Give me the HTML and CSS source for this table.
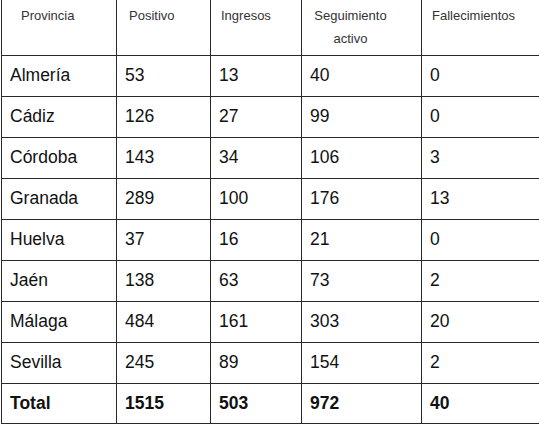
FILE: index.html
```html
<!DOCTYPE html>
<html lang="es">
<head>
<meta charset="utf-8">
<title>Casos por provincia</title>
<link rel="stylesheet" href="styles.css">
</head>
<body>
<div class="wrap">
<table class="data">
  <colgroup>
    <col class="c1"><col class="c2"><col class="c3"><col class="c4"><col class="c5">
  </colgroup>
  <thead>
    <tr>
      <th class="h-prov">Provincia</th>
      <th class="h-pos">Positivo</th>
      <th class="h-ing">Ingresos</th>
      <th class="h-seg">Seguimiento<br>activo</th>
      <th class="h-fal">Fallecimientos</th>
    </tr>
  </thead>
  <tbody>
    <tr><td>Almería</td><td>53</td><td>13</td><td>40</td><td>0</td></tr>
    <tr><td>Cádiz</td><td>126</td><td>27</td><td>99</td><td>0</td></tr>
    <tr><td>Córdoba</td><td>143</td><td>34</td><td>106</td><td>3</td></tr>
    <tr><td>Granada</td><td>289</td><td>100</td><td>176</td><td>13</td></tr>
    <tr><td>Huelva</td><td>37</td><td>16</td><td>21</td><td>0</td></tr>
    <tr><td>Jaén</td><td>138</td><td>63</td><td>73</td><td>2</td></tr>
    <tr><td>Málaga</td><td>484</td><td>161</td><td>303</td><td>20</td></tr>
    <tr><td>Sevilla</td><td>245</td><td>89</td><td>154</td><td>2</td></tr>
    <tr class="total"><td>Total</td><td>1515</td><td>503</td><td>972</td><td>40</td></tr>
  </tbody>
</table>
</div>
</body>
</html>
```

FILE: styles.css
```css
html, body {
  margin: 0;
  padding: 0;
  background: #ffffff;
  overflow: hidden;
}

.wrap {
  width: 539px;
  height: 426px;
  overflow: hidden;
  padding-left: 1px;
}

.data {
  border-collapse: collapse;
  table-layout: fixed;
  width: 580px;
  font-family: "Liberation Sans", Arial, sans-serif;
  color: #111;
}

.c1 { width: 115px; }
.c2 { width: 94px; }
.c3 { width: 91px; }
.c4 { width: 120px; }
.c5 { width: 160px; }

.data th,
.data td {
  border: 1px solid #2a2a2a;
}

.data thead th {
  border-top: none;
  height: 55px;
  padding: 4px 0 0 0;
  vertical-align: top;
  text-align: left;
  font-weight: normal;
  font-size: 13px;
  line-height: 23px;
  color: #333;
  box-sizing: border-box;
}

.data .h-prov { padding-left: 19px; }
.data .h-pos { padding-left: 12px; }
.data .h-ing { padding-left: 10px; }
.data .h-seg { text-align: center; padding-right: 22px; }
.data .h-fal { padding-left: 10px; }

.data tbody td {
  height: 41px;
  padding: 0 0 0 8px;
  font-size: 17.5px;
  vertical-align: middle;
  box-sizing: border-box;
}

.data tbody tr.total td {
  height: 40px;
  font-weight: bold;
}
```
